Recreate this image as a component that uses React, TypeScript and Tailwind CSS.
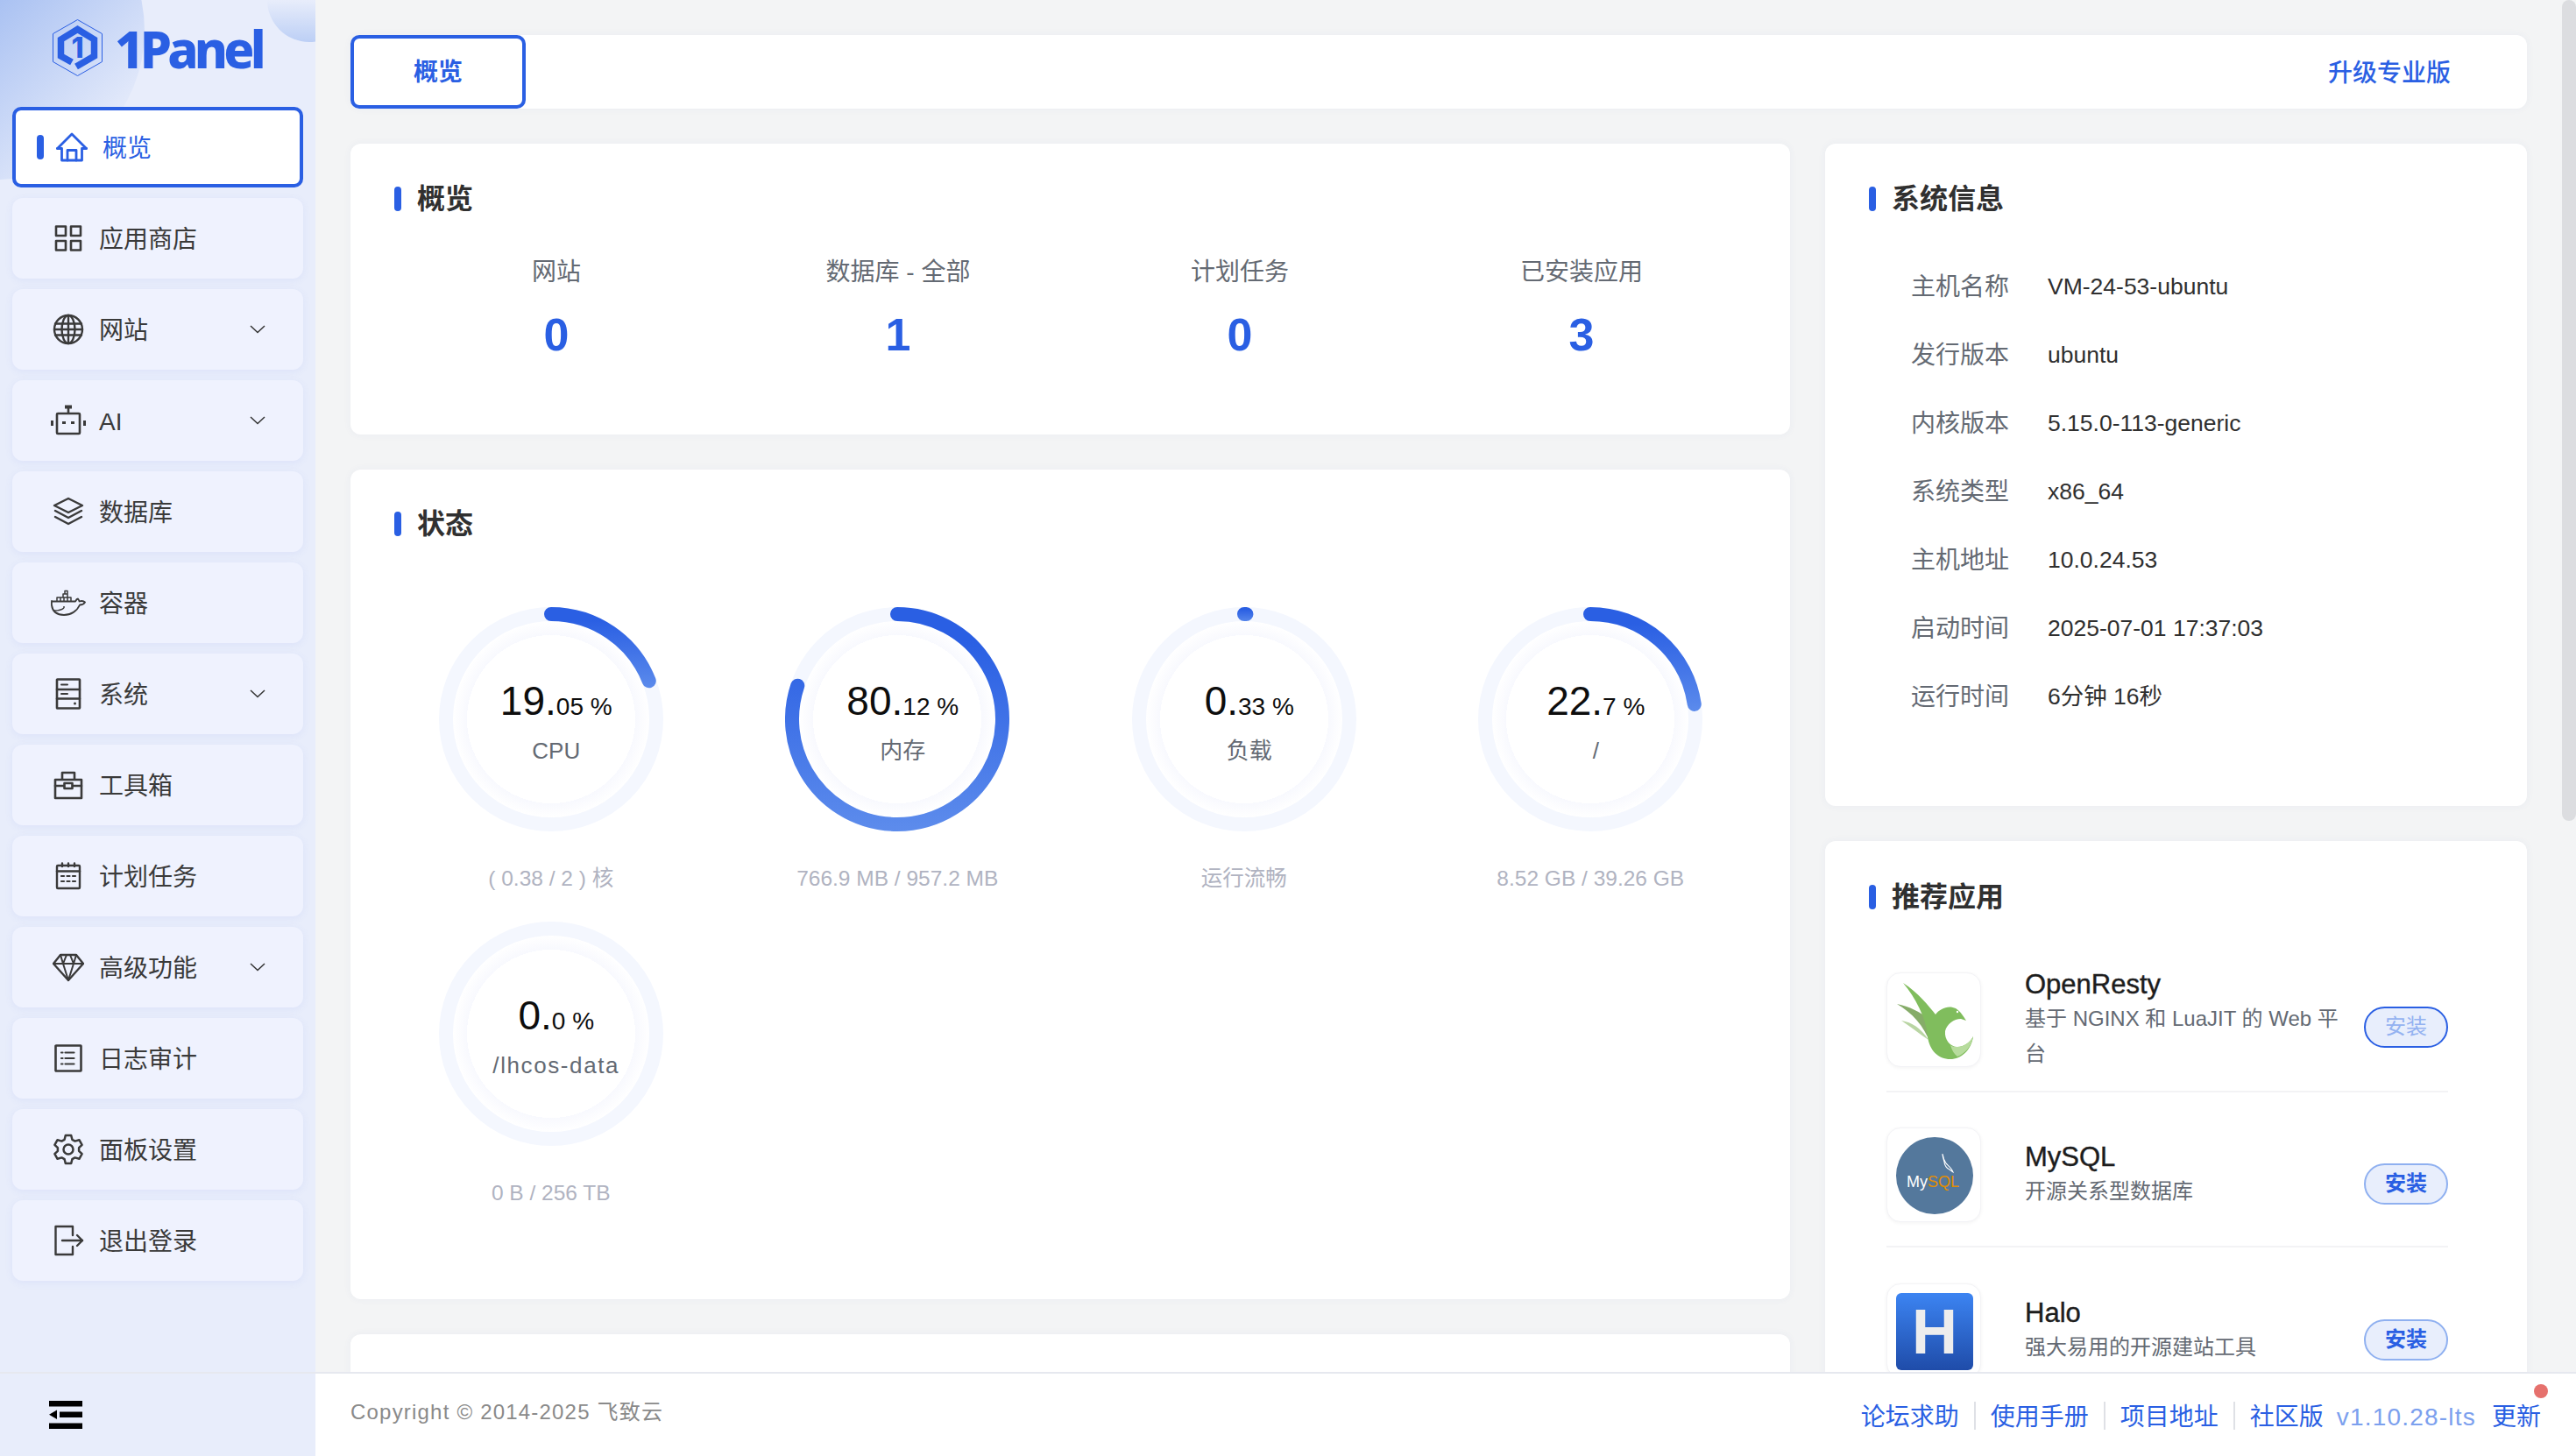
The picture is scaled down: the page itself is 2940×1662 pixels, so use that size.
import React from "react";

const BLUE = "#2a5fe3";

function Ico({ w = 36, h = 36, children, c = "#3a3a3a", sw = 2.6 }: { w?: number; h?: number; children: React.ReactNode; c?: string; sw?: number }) {
  return (
    <svg width={w} height={h} viewBox="0 0 36 36" fill="none" stroke={c} strokeWidth={sw} strokeLinejoin="round" strokeLinecap="round" className="shrink-0">
      {children}
    </svg>
  );
}

const Home = () => (
  <Ico c={BLUE} sw={2.8}>
    <path d="M1.500 19.500 18 3l16.500 16.500" />
    <path d="M1.500 19.500h5v13.500h23V19.500h5" />
    <path d="M13 33V21.500h10V33" />
  </Ico>
);
const Apps = () => (
  <Ico>
    <rect x="4" y="4.500" width="11" height="10.500" />
    <rect x="21" y="4.500" width="11" height="10.500" />
    <rect x="4" y="21" width="11" height="10.500" />
    <rect x="21" y="21" width="11" height="10.500" />
  </Ico>
);
const Globe = () => (
  <Ico sw={2.4}>
    <circle cx="18" cy="18" r="16" />
    <ellipse cx="18" cy="18" rx="7.500" ry="16" />
    <path d="M18 2v32M3 11.500h30M3 24.500h30M2 18h32" />
  </Ico>
);
const Robot = () => (
  <svg width={40} height={36} viewBox="0 0 40 36" fill="none" stroke="#3a3a3a" strokeWidth="2.600" className="shrink-0">
    <rect x="7" y="10" width="26" height="23" rx="1" />
    <path d="M20 10V3" />
    <path d="M16 2.500h8" strokeWidth="4" />
    <path d="M1.500 18v6M38.500 18v6" strokeWidth="3" />
    <rect x="13" y="19" width="4" height="3" fill="#3a3a3a" stroke="none" />
    <rect x="23" y="19" width="4" height="3" fill="#3a3a3a" stroke="none" />
  </svg>
);
const Layers = () => (
  <Ico sw={2.4}>
    <path d="M18 3 34 11 18 19 2 11Z" />
    <path d="M3 17l15 8 15-8" />
    <path d="M3 24l15 8 15-8" />
  </Ico>
);
const Docker = () => (
  <svg width={40} height={30} viewBox="0 0 40 30" fill="none" stroke="#3a3a3a" strokeWidth="1.800" strokeLinejoin="round" className="shrink-0">
    <path d="M1 13.500h27c1-2 2-3 3-3 1 1.200 1.500 2 1.500 3 2.500-.8 5-.5 6.500 1-1.500 2.500-3.500 3-6 3-3 7-10 11.500-18 11.500-8 0-13-4-14-11-.3-2 0-3.500 0-5Z" />
    <path d="M7 13V9h16v4M11 9V13M15 9V13M19 9V13M14 9V5h5v4M16 5V1.500h3V5" strokeWidth="1.500" />
    <circle cx="15" cy="20" r="1" fill="#3a3a3a" stroke="none" />
    <path d="M4 24c4 0 8-.5 11-3" strokeWidth="1.500" />
  </svg>
);
const Sys = () => (
  <Ico sw={2.6}>
    <rect x="5" y="1.500" width="26" height="33" rx="0.500" />
    <path d="M5 13h26M5 23.500h26" />
    <path d="M10 7.500h7M10 18h7" strokeWidth="2" />
    <circle cx="25.500" cy="29" r="1.500" fill="#3a3a3a" stroke="none" />
  </Ico>
);
const Tool = () => (
  <Ico sw={2.6}>
    <path d="M3 33V12h30v21Z" />
    <path d="M11 11.500V4h14v7.500" />
    <path d="M3 19h10M23 19h10" />
    <rect x="13.500" y="16" width="9" height="6" />
  </Ico>
);
const Cal = () => (
  <Ico sw={2.400}>
    <rect x="5" y="6" width="26" height="26" rx="1" />
    <path d="M5 12.500h26" />
    <path d="M11 3.500V7M18 3.500V7M25 3.500V7" />
    <path d="M10 18h3M16.500 18h3M23 18h3M10 24h3M16.500 24h3M23 24h3" strokeWidth="2.200" />
  </Ico>
);
const Gem = () => (
  <Ico sw={2.400}>
    <path d="M9 4h18l8 10-17 19L1 14Z" />
    <path d="M1 14h34M12 14l6 19 6-19M12 14l4-10M24 14l-4-10M9 4l3 10M27 4l-3 10" strokeWidth="2" />
  </Ico>
);
const Log = () => (
  <Ico sw={2.600}>
    <rect x="3.500" y="3.500" width="29" height="29" rx="0.500" />
    <path d="M14.500 11.500h10M14.500 18h10M14.500 24.500h10" strokeWidth="2.200" />
    <path d="M10 11.500h1.500M10 18h1.500M10 24.500h1.500" strokeWidth="2.200" />
  </Ico>
);
const Gear = () => (
  <Ico sw={2.500}>
    <path d="M14.800 2h6.400l1.200 4.800 3.200 1.800 4.800-1.400 3.200 5.600-3.500 3.400v3.600l3.500 3.400-3.200 5.600-4.800-1.400-3.200 1.800L21.200 34h-6.400l-1.200-4.800-3.200-1.800-4.800 1.400-3.200-5.600 3.500-3.400v-3.600L2.400 12.800l3.200-5.600 4.800 1.400 3.200-1.800Z" />
    <circle cx="18" cy="18" r="5.500" />
  </Ico>
);
const Logout = () => (
  <Ico sw={2.400}>
    <path d="M23 12V2H3.500v32H23v-9" />
    <path d="M11 18h23" />
    <path d="M28 12l6 6-6 6" />
  </Ico>
);

const Chevron = () => (
  <svg width="18" height="10" viewBox="0 0 18 10" fill="none" stroke="#333" strokeWidth="1.500" className="shrink-0">
    <path d="M1 1l8 7.500L17 1" />
  </svg>
);

const menu: { t: string; i: React.ReactNode; c?: boolean }[] = [
  { t: "应用商店", i: <Apps /> },
  { t: "网站", i: <Globe />, c: true },
  { t: "AI", i: <Robot />, c: true },
  { t: "数据库", i: <Layers /> },
  { t: "容器", i: <Docker /> },
  { t: "系统", i: <Sys />, c: true },
  { t: "工具箱", i: <Tool /> },
  { t: "计划任务", i: <Cal /> },
  { t: "高级功能", i: <Gem />, c: true },
  { t: "日志审计", i: <Log /> },
  { t: "面板设置", i: <Gear /> },
  { t: "退出登录", i: <Logout /> },
];

function Sidebar() {
  return (
    <aside className="relative w-[360px] shrink-0 h-full flex flex-col bg-[#e8edfb] overflow-hidden">
      <div className="absolute left-[-175px] top-[-135px] w-[340px] h-[340px] rounded-full bg-[linear-gradient(135deg,#a9c1f2_45%,#e8edfb_88%)]" />
      <div className="absolute left-[305px] top-[-48px] w-[96px] h-[96px] rounded-full bg-[linear-gradient(180deg,#e8edfb_50%,#bccff5_100%)]" />
      <div className="relative h-[122px] shrink-0 flex items-start pl-[60px] pt-[22px]">
        <svg width="57" height="65" viewBox="0 0 57 65" fill="none" className="shrink-0">
          <path d="M28.500.5 56.500 16.500v32L28.500 64.500.5 48.500v-32Z" stroke={BLUE} strokeWidth="1" />
          <path d="M22 49 9.500 42V23L28.500 11.500 47.500 23v19L27 54" stroke={BLUE} strokeWidth="7.500" />
          <text x="28.500" y="44" textAnchor="middle" fontSize="32" fontWeight="800" fill={BLUE} fontFamily="Inter, sans-serif">1</text>
        </svg>
        <span className="ml-[14px] mt-[-2px] text-[#2a5fe3] text-[58px] leading-[72px] font-extrabold tracking-[-4.800px] [font-family:Noto_Sans,sans-serif]">1Panel</span>
      </div>
      <nav className="relative flex flex-col gap-[12px] px-[14px]">
        <div className="h-[92px] flex items-center rounded-[10px] border-[4px] border-[#2a5fe3] bg-white pl-[24px]">
          <span className="w-[8px] h-[28px] rounded-full bg-[#2a5fe3]" />
          <span className="ml-[14px]"><Home /></span>
          <span className="ml-[17px] pt-[4px] text-[28px] text-[#2a5fe3]">概览</span>
        </div>
        {menu.map((m) => (
          <div key={m.t} className="h-[92px] flex items-center rounded-[12px] bg-[#eff2fe] shadow-[0_2px_10px_rgba(90,120,230,0.08)] pl-[46px] pr-[43px]">
            <span className="w-[36px] h-[36px] flex items-center justify-center shrink-0">{m.i}</span>
            <span className="ml-[17px] pt-[4px] text-[28px] text-[#3a3a3a] flex-1">{m.t}</span>
            {m.c && <Chevron />}
          </div>
        ))}
      </nav>
      <div className="flex-1" />
      <div className="relative h-[96px] shrink-0 border-t-[2px] border-[#e6e8ef] pl-[56px] pt-[31px]">
        <svg width="38" height="32" viewBox="0 0 38 32" fill="#000">
          <rect x="0" y="0" width="38" height="6.500" />
          <rect x="12" y="12.500" width="26" height="6.500" />
          <path d="M0 15.700 9 10.500v10.500Z" />
          <rect x="0" y="25.500" width="38" height="6.500" />
        </svg>
      </div>
    </aside>
  );
}

function Title({ children, className = "" }: { children: React.ReactNode; className?: string }) {
  return (
    <div className={"flex items-center h-[40px] pl-[50px] " + className}>
      <span className="w-[8px] h-[28px] rounded-full bg-[#2a5fe3]" />
      <span className="ml-[18px] text-[32px] font-semibold text-[#303030]">{children}</span>
    </div>
  );
}

function Ring({ id, pct, y2, big, small, label, sub }: { id: string; pct: number; y2: number; big: string; small: string; label: string; sub: string }) {
  const C = 2 * Math.PI * 120;
  return (
    <div className="flex flex-col items-center">
      <div className="relative w-[256px] h-[256px]">
        <svg width="256" height="256" viewBox="0 0 256 256" fill="none">
          <defs>
            <linearGradient id={id} gradientUnits="userSpaceOnUse" x1="0" y1="0" x2="0" y2={y2}>
              <stop offset="0.150" stopColor="#2a5fe3" />
              <stop offset="1" stopColor="#5d8cec" />
            </linearGradient>
            <radialGradient id={id + "-in"} cx="0.500" cy="0.500" r="0.500">
              <stop offset="0.857" stopColor="#ffffff" />
              <stop offset="0.857" stopColor="#f8f9fe" />
              <stop offset="1" stopColor="#ffffff" />
            </radialGradient>
          </defs>
          <circle cx="128" cy="128" r="112" fill={`url(#${id}-in)`} />
          <circle cx="128" cy="128" r="120" stroke="#f4f7fe" strokeWidth="16" />
          {pct > 0 && (
            <path
              d="M128 8a120 120 0 1 1-.01 0"
              stroke={`url(#${id})`}
              strokeWidth="16"
              strokeLinecap="round"
              strokeDasharray={`${(pct / 100) * C} ${C}`}
            />
          )}
        </svg>
        <div className="absolute inset-0 flex flex-col items-center pl-[12px] pt-[80px]">
          <div className="h-[54px] leading-[54px] text-[#0d0d0d] whitespace-nowrap">
            <span className="text-[46px]">{big}</span>
            <span className="text-[28px]">{small}</span>
          </div>
          <div className={"mt-[10px] h-[40px] leading-[40px] text-[26px] text-[#646a73] whitespace-nowrap " + (label.length > 5 ? "tracking-[1.600px]" : "")}>{label}</div>
        </div>
      </div>
      <div className="mt-[38px] h-[32px] leading-[32px] text-[24.500px] text-[#b0b3c1] whitespace-nowrap">{sub}</div>
    </div>
  );
}

const info: [string, string][] = [
  ["主机名称", "VM-24-53-ubuntu"],
  ["发行版本", "ubuntu"],
  ["内核版本", "5.15.0-113-generic"],
  ["系统类型", "x86_64"],
  ["主机地址", "10.0.24.53"],
  ["启动时间", "2025-07-01 17:37:03"],
  ["运行时间", "6分钟 16秒"],
];

const OpenResty = () => (
  <svg width="108" height="108" viewBox="0 0 108 108" className="absolute inset-0">
    <path d="M16 54C28 56 38 62 47 76 38 70 28 62 16 54Z" fill="#b9d5a3" />
    <path d="M11 35C25 38 38 44 47 52L49 80C42 60 28 45 11 35Z" fill="#86ac69" />
    <path d="M18 11C35 22 48 38 55 47 60 40 70 36 78 40 84 44 86 48 90 54L84 52C76 52 68 58 66 66 65 76 72 84 80 84 88 84 95 78 98 72 96 88 84 98 72 98 58 98 48 88 46 72 44 50 32 28 18 11Z" fill="#80bd5d" />
    <path d="M80 84C88 84 95 78 98 72 96 84 88 92 80 95 76 92 74 88 72 82 75 84 77 84 80 84Z" fill="#b7dc9d" />
    <circle cx="80" cy="44" r="1.200" fill="#fff" />
  </svg>
);

const MySql = () => (
  <svg width="108" height="108" viewBox="0 0 108 108" className="absolute inset-0">
    <circle cx="54" cy="54" r="44" fill="#54789c" />
    <path d="M63 29c1 6 2 8 4 11 3 3 7 6 8 10l-4-3c-3-1-6-5-6-9-1-3-2-6-2-9Z" stroke="#fff" strokeWidth="1.100" fill="none" />
    <text x="22" y="67" fontSize="18" fill="#fff" fontFamily="'Liberation Sans', sans-serif">My</text>
    <text x="46" y="67" fontSize="18" fill="#e48e00" fontFamily="'Liberation Sans', sans-serif">SQL</text>
  </svg>
);

const Halo = () => (
  <div className="absolute left-[10px] top-[10px] w-[88px] h-[88px] rounded-[6px] bg-[linear-gradient(180deg,#3c84f2,#1f4ca9)] flex items-center justify-center">
    <span className="text-[72px] leading-[72px] font-bold text-[#ededed]">H</span>
  </div>
);

function AppRow({ logo, name, desc, dis, cls }: { logo: React.ReactNode; name: string; desc: string; dis?: boolean; cls: string }) {
  return (
    <div className={"flex items-center border-[#f3f3f5] " + cls}>
      <div className="relative w-[108px] h-[108px] shrink-0 rounded-[16px] bg-white border border-[#f3f3f6] shadow-[0_1px_4px_rgba(0,0,0,0.05)] overflow-hidden">{logo}</div>
      <div className="ml-[50px] w-[365px] shrink-0">
        <div className="h-[38px] leading-[38px] text-[31px] [-webkit-text-stroke:0.4px_#1d1d1d] text-[#1d1d1d]">{name}</div>
        <div className="text-[24px] leading-[40px] text-[#646a73]">{desc}</div>
      </div>
      <div
        className={
          "ml-auto w-[96px] h-[47px] rounded-full flex items-center justify-center text-[24px] bg-[#e8eefc] border-[2px] " +
          (dis ? "mt-[16px] border-[#2a5fe3] text-[#94b2f1]" : "mt-[20px] border-[#8fb0f0] text-[#2a5fe3] font-semibold")
        }
      >
        安装
      </div>
    </div>
  );
}

const Sep = () => <span className="w-[2px] h-[32px] bg-[#dfe1e6] mx-[17px]" />;

export default function App() {
  return (
    <div className="relative w-[2940px] h-[1662px] flex overflow-hidden bg-[#f3f4f5] [font-family:Liberation_Sans,Noto_Sans_CJK_SC,sans-serif]">
      <Sidebar />
      <div className="flex-1 min-w-0 h-full flex flex-col">
        <main className="flex-1 min-h-0 overflow-hidden pl-[40px] pr-[56px] pt-[40px]">
          <div className="h-[84px] rounded-[12px] bg-white shadow-[0_0_10px_rgba(60,80,160,0.05)] flex items-center justify-between pr-[87px]">
            <div className="w-[200px] h-[84px] rounded-[10px] border-[4px] border-[#2a5fe3] flex items-center justify-center pt-[2px] text-[28px] font-semibold text-[#2a5fe3]">概览</div>
            <span className="pt-[3px] text-[28px] font-medium text-[#2a5fe3]">升级专业版</span>
          </div>
          <div className="mt-[40px] grid grid-cols-[1643px_801px] gap-x-[40px] items-start">
            <div className="flex flex-col gap-[40px]">
              <section className="h-[332px] rounded-[12px] bg-white shadow-[0_0_10px_rgba(60,80,160,0.05)] pt-[43px]">
                <Title>概览</Title>
                <div className="mt-[44px] ml-[40px] w-[1560px] grid grid-cols-4 text-center">
                  {[
                    ["网站", "0"],
                    ["数据库 - 全部", "1"],
                    ["计划任务", "0"],
                    ["已安装应用", "3"],
                  ].map(([l, v]) => (
                    <div key={l}>
                      <div className="h-[40px] leading-[40px] text-[28px] text-[#646a73]">{l}</div>
                      <div className="mt-[21px] h-[60px] leading-[60px] text-[52px] font-semibold text-[#2a5fe3]">{v}</div>
                    </div>
                  ))}
                </div>
              </section>
              <section className="h-[947px] rounded-[12px] bg-white shadow-[0_0_10px_rgba(60,80,160,0.05)] pt-[42px]">
                <Title>状态</Title>
                <div className="mt-[75px] ml-[31px] w-[1582px] grid grid-cols-4 gap-y-[33px]">
                  <Ring id="r1" pct={19.05} y2={95} big="19." small="05 %" label="CPU" sub="( 0.38 / 2 ) 核" />
                  <Ring id="r2" pct={80.12} y2={256} big="80." small="12 %" label="内存" sub="766.9 MB / 957.2 MB" />
                  <Ring id="r3" pct={0.33} y2={18} big="0." small="33 %" label="负载" sub="运行流畅" />
                  <Ring id="r4" pct={22.7} y2={122} big="22." small="7 %" label="/" sub="8.52 GB / 39.26 GB" />
                  <Ring id="r5" pct={0} y2={10} big="0." small="0 %" label="/lhcos-data" sub="0 B / 256 TB" />
                </div>
              </section>
              <section className="h-[300px] rounded-[12px] bg-white shadow-[0_0_10px_rgba(60,80,160,0.05)]" />
            </div>
            <div className="flex flex-col gap-[40px]">
              <section className="h-[756px] rounded-[12px] bg-white shadow-[0_0_10px_rgba(60,80,160,0.05)] pt-[43px]">
                <Title>系统信息</Title>
                <div className="mt-[40px] pl-[98px]">
                  {info.map(([k, v]) => (
                    <div key={k} className="h-[78px] flex items-center pt-[4px]">
                      <span className="w-[156px] shrink-0 text-[28px] text-[#646a73]">{k}</span>
                      <span className="text-[26.500px] text-[#2f2f2f]">{v}</span>
                    </div>
                  ))}
                </div>
              </section>
              <section className="rounded-[12px] bg-white shadow-[0_0_10px_rgba(60,80,160,0.05)] pt-[44px] h-[800px]">
                <Title>推荐应用</Title>
                <div className="mt-[21px] ml-[70px] w-[641px]">
                  <AppRow logo={<OpenResty />} name="OpenResty" desc="基于 NGINX 和 LuaJIT 的 Web 平台" dis cls="pt-[40px] pb-[22px] border-b-[2px]" />
                  <AppRow logo={<MySql />} name="MySQL" desc="开源关系型数据库" cls="pt-[40px] pb-[27px] border-b-[2px]" />
                  <AppRow logo={<Halo />} name="Halo" desc="强大易用的开源建站工具" cls="pt-[41px] pb-[27px]" />
                </div>
              </section>
            </div>
          </div>
        </main>
        <footer className="h-[96px] shrink-0 bg-white border-t-[2px] border-[#e6e8ef] flex items-center pl-[40px] pr-[40px] pt-[2px]">
          <span className="mb-[8px] text-[24px] tracking-[1.200px] text-[#8a8a8a]">Copyright © 2014-2025 飞致云</span>
          <div className="ml-auto flex items-center text-[28px] text-[#2a5fe3]">
            <span className="pt-[4px]">论坛求助</span>
            <Sep />
            <span className="pt-[4px]">使用手册</span>
            <Sep />
            <span className="pt-[4px]">项目地址</span>
            <Sep />
            <span className="pt-[4px]">社区版</span>
            <span className="ml-[15px] pt-[4px] tracking-[1.200px] text-[#7ca0ee]">v1.10.28-lts</span>
            <span className="relative ml-[18px] pt-[4px]">
              更新
              <span className="absolute right-[-8px] top-[-13px] w-[16px] h-[16px] rounded-full bg-[#e6716d]" />
            </span>
          </div>
        </footer>
      </div>
      <div className="absolute right-0 top-0 w-[16px] h-[937px] rounded-full bg-[#dcdde0]" />
    </div>
  );
}
